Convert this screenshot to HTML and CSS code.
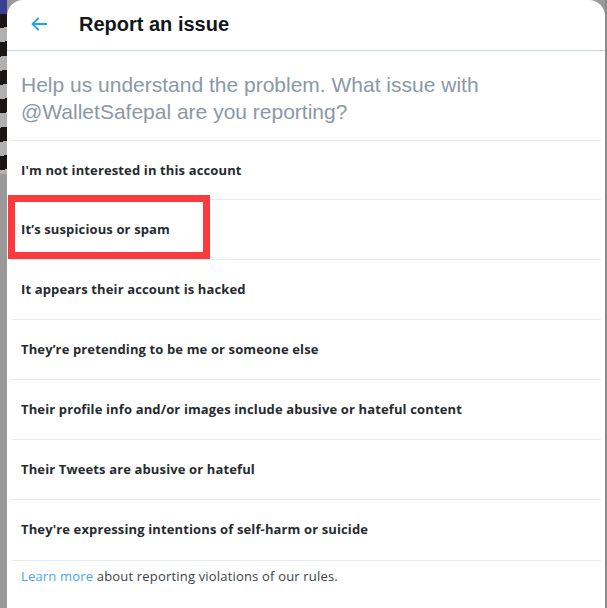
FILE: index.html
```html
<!DOCTYPE html>
<html>
<head>
<meta charset="utf-8">
<link rel="stylesheet" href="styles.css">
</head>
<body>
<div class="page">
  <div class="backdrop">
    <div class="bd-blue"></div>
    <div class="bd-stripes"></div>
    <div class="bd-gray"></div>
  </div>
  <div class="modal">
    <div class="header">
      <svg class="back" viewBox="0 0 24 24" width="22" height="22"><path d="M20 11H7.414l4.293-4.293a1 1 0 0 0-1.414-1.414l-6 6a1 1 0 0 0 0 1.414l6 6a1 1 0 0 0 1.414-1.414L7.414 13H20a1 1 0 1 0 0-2z" fill="#1da1f2"/></svg>
      <h1 class="title">Report an issue</h1>
    </div>
    <p class="intro">Help us understand the problem. What issue with @WalletSafepal are you reporting?</p>
    <ul class="options">
      <li class="option">I'm not interested in this account</li>
      <li class="option">It’s suspicious or spam</li>
      <li class="option">It appears their account is hacked</li>
      <li class="option">They’re pretending to be me or someone else</li>
      <li class="option">Their profile info and/or images include abusive or hateful content</li>
      <li class="option">Their Tweets are abusive or hateful</li>
      <li class="option">They're expressing intentions of self-harm or suicide</li>
    </ul>
    <p class="footer"><a class="link" href="#">Learn more</a> about reporting violations of our rules.</p>
    <div class="highlight"></div>
  </div>
  <div class="edge"></div>
</div>
</body>
</html>
```
FILE: styles.css
```css
* { box-sizing: border-box; }
html, body { margin: 0; padding: 0; }
body { width: 607px; height: 608px; overflow: hidden; background: #9a9a9a; font-family: "Liberation Sans", Arial, sans-serif; }
.page { display: flex; height: 608px; }
.backdrop { width: 7px; display: flex; flex-direction: column; background: #9c9c9c; }
.bd-blue { height: 14px; background: #3b3f8f; }
.bd-stripes { height: 160px; background: repeating-linear-gradient(170deg, #1a1614 0 14px, #b0b0b0 14px 28px); }
.bd-gray { flex: 1; background: #999; }
.modal { position: relative; width: 598px; height: 608px; background: #fff; border-radius: 16px 16px 0 0; overflow: hidden; }
.edge { width: 2px; background: #8a8a8a; }
.header { height: 51px; display: flex; align-items: center; border-bottom: 1px solid #ccd6dd; padding-left: 21px; }
.back { display: block; margin-top: -2px; }
.title { margin: -1px 0 0 29px; font-size: 20px; font-weight: bold; color: #14171a; }
.intro { margin: 0; padding: 20px 14px 14px; font-size: 21px; line-height: 27px; color: #8b98a5; height: 89px; }
.options { list-style: none; margin: 0 4px; padding: 0; }
.option { height: 60px; display: flex; align-items: center; padding: 0 0 2px 10px; border-top: 1px solid #e6ecf0; font-family: "Open Sans", sans-serif; font-size: 13px; font-weight: 700; letter-spacing: 0.13px; color: #262b30; }
.option:nth-child(n+2) { margin-top: -1px; height: 61px; }
.footer { margin: 0 4px; border-top: 1px solid #e6ecf0; padding: 6px 10px 0; font-family: "Open Sans", sans-serif; font-size: 13px; line-height: 18px; letter-spacing: 0.18px; color: #3b3f44; }
.link { color: #4aa6ef; text-decoration: none; }
.highlight { position: absolute; left: 1px; top: 195px; width: 202px; height: 64px; border: 7px solid #fa3a3c; }
```
